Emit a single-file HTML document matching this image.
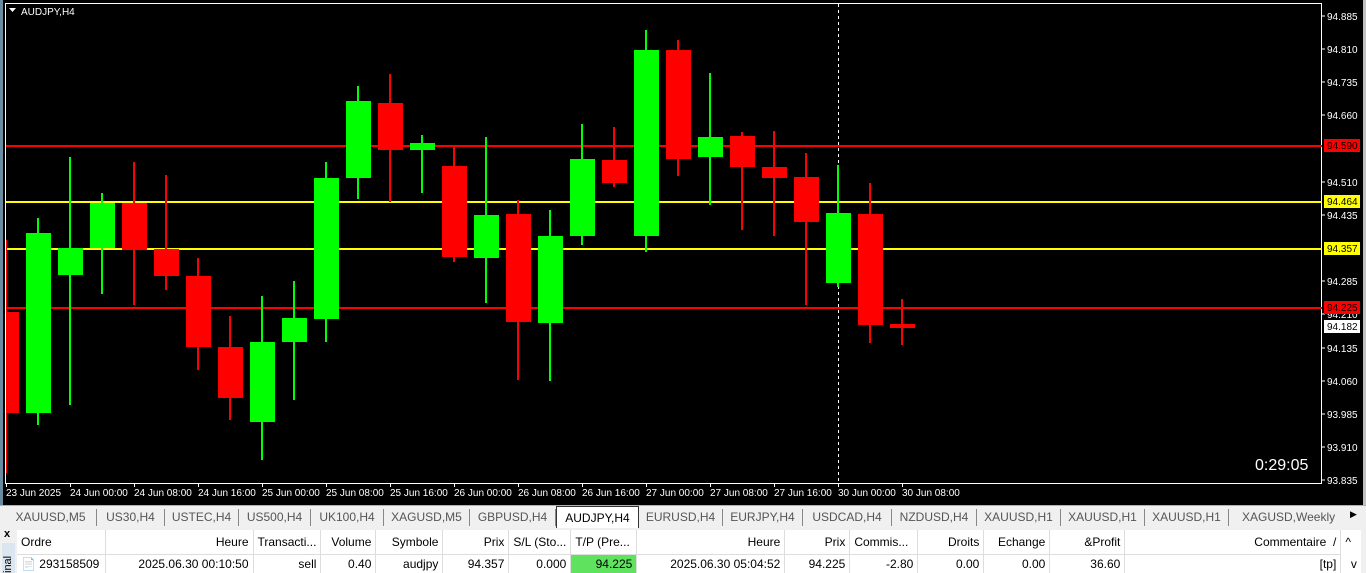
<!DOCTYPE html>
<html><head><meta charset="utf-8"><style>
*{margin:0;padding:0;box-sizing:border-box}
body{width:1366px;height:573px;overflow:hidden;background:#f0f0f0;font-family:"Liberation Sans",sans-serif;position:relative}
.tabs{position:absolute;left:0;top:505px;width:1366px;height:22px;background:#f0f0f0;border-top:1px solid #b0b0b0;font-size:12px;color:#555}
.tab{position:absolute;top:3px;height:17px;line-height:17px;border-right:1px solid #888;text-align:center}
.tab.act{background:#fff;color:#000;border:1px solid #333;border-bottom:none;top:0;height:22px;line-height:22px}
table{border-collapse:collapse;font-size:12px;position:absolute;left:17px;top:530px;background:#fff}
td{height:23px;padding:0 4px;border-right:1px solid #ddd;white-space:nowrap;color:#000}
tr.h td{border-bottom:1px solid #ddd;height:24px}
tr.r td{height:19px}
.r td{text-align:right}
</style></head><body>
<svg width="1366" height="505" style="position:absolute;left:0;top:0" font-family="Liberation Sans, sans-serif">
<rect x="0" y="0" width="1366" height="505" fill="#000"/>
<rect x="0" y="0" width="3" height="505" fill="#6a8aa0"/>
<rect x="1363" y="0" width="3" height="505" fill="#c0c0c0"/>
<rect x="5.5" y="3.5" width="1316" height="480" fill="none" stroke="#fff" stroke-width="1"/>
<g fill="#fff" font-size="10">
<text x="1327" y="20">94.885</text><text x="1327" y="53">94.810</text><text x="1327" y="86">94.735</text><text x="1327" y="119">94.660</text>
<text x="1327" y="186">94.510</text><text x="1327" y="219">94.435</text><text x="1327" y="285">94.285</text><text x="1327" y="318">94.210</text>
<text x="1327" y="352">94.135</text><text x="1327" y="385">94.060</text><text x="1327" y="418">93.985</text><text x="1327" y="451">93.910</text><text x="1327" y="484">93.835</text>
</g>
<g stroke="#fff"><path d="M1322 16h3M1322 49h3M1322 82h3M1322 115h3M1322 182h3M1322 215h3M1322 281h3M1322 314h3M1322 348h3M1322 381h3M1322 414h3M1322 447h3M1322 480h3"/></g>
<line x1="838.5" y1="4" x2="838.5" y2="483" stroke="#fff" stroke-dasharray="3,3"/>
<g id="c"></g>
<g stroke-width="2">
<line x1="6" y1="146" x2="1322" y2="146" stroke="#f00"/>
<line x1="6" y1="202" x2="1322" y2="202" stroke="#ff0"/>
<line x1="6" y1="249" x2="1322" y2="249" stroke="#ff0"/>
<line x1="6" y1="308" x2="1322" y2="308" stroke="#f00"/>
</g>
<rect x="1324" y="139" width="36" height="13" fill="#f00"/><text x="1327" y="149" font-size="10" fill="#000">94.590</text>
<rect x="1324" y="195" width="36" height="13" fill="#ff0"/><text x="1327" y="205" font-size="10" fill="#000">94.464</text>
<rect x="1324" y="242" width="36" height="13" fill="#ff0"/><text x="1327" y="252" font-size="10" fill="#000">94.357</text>
<rect x="1324" y="301" width="36" height="13" fill="#f00"/><text x="1327" y="311" font-size="10" fill="#000">94.225</text>
<rect x="1324" y="320" width="36" height="13" fill="#fff"/><text x="1327" y="330" font-size="10" fill="#000">94.182</text>
<path d="M9 8h7l-3.5 4z" fill="#fff"/>
<text x="21" y="15" font-size="10" fill="#fff">AUDJPY,H4</text>
<text x="1255" y="470" font-size="16" fill="#fff">0:29:05</text>
<g fill="#fff" font-size="10">
<text x="6" y="496">23 Jun 2025</text><text x="70" y="496">24 Jun 00:00</text><text x="134" y="496">24 Jun 08:00</text><text x="198" y="496">24 Jun 16:00</text>
<text x="262" y="496">25 Jun 00:00</text><text x="326" y="496">25 Jun 08:00</text><text x="390" y="496">25 Jun 16:00</text><text x="454" y="496">26 Jun 00:00</text>
<text x="518" y="496">26 Jun 08:00</text><text x="582" y="496">26 Jun 16:00</text><text x="646" y="496">27 Jun 00:00</text><text x="710" y="496">27 Jun 08:00</text>
<text x="774" y="496">27 Jun 16:00</text><text x="838" y="496">30 Jun 00:00</text><text x="902" y="496">30 Jun 08:00</text>
</g>
<g stroke="#fff"><path d="M6.5 484v3M70.5 484v3M134.5 484v3M198.5 484v3M262.5 484v3M326.5 484v3M390.5 484v3M454.5 484v3M518.5 484v3M582.5 484v3M646.5 484v3M710.5 484v3M774.5 484v3M838.5 484v3M902.5 484v3"/></g>
<rect x="7" y="312" width="12" height="101" fill="#f00"/><rect x="6" y="240" width="1" height="233" fill="#f00"/>
<g id="cs">
<!-- green: 0f0 red: f00 ; cx, bodyTop, bodyBot, wickTop, wickBot -->
<rect x="26" y="233" width="25" height="180" fill="#0f0"/><rect x="37" y="218" width="2" height="207" fill="#0f0"/>
<rect x="58" y="248" width="25" height="27" fill="#0f0"/><rect x="69" y="157" width="2" height="248" fill="#0f0"/>
<rect x="90" y="203" width="25" height="45" fill="#0f0"/><rect x="101" y="193" width="2" height="101" fill="#0f0"/>
<rect x="122" y="203" width="25" height="47" fill="#f00"/><rect x="133" y="162" width="2" height="143" fill="#f00"/>
<rect x="154" y="249" width="25" height="27" fill="#f00"/><rect x="165" y="175" width="2" height="115" fill="#f00"/>
<rect x="186" y="276" width="25" height="71" fill="#f00"/><rect x="197" y="258" width="2" height="112" fill="#f00"/>
<rect x="218" y="347" width="25" height="51" fill="#f00"/><rect x="229" y="316" width="2" height="104" fill="#f00"/>
<rect x="250" y="342" width="25" height="80" fill="#0f0"/><rect x="261" y="296" width="2" height="164" fill="#0f0"/>
<rect x="282" y="318" width="25" height="24" fill="#0f0"/><rect x="293" y="281" width="2" height="119" fill="#0f0"/>
<rect x="314" y="178" width="25" height="141" fill="#0f0"/><rect x="325" y="162" width="2" height="180" fill="#0f0"/>
<rect x="346" y="101" width="25" height="77" fill="#0f0"/><rect x="357" y="86" width="2" height="113" fill="#0f0"/>
<rect x="378" y="103" width="25" height="47" fill="#f00"/><rect x="389" y="74" width="2" height="128" fill="#f00"/>
<rect x="410" y="143" width="25" height="7" fill="#0f0"/><rect x="421" y="135" width="2" height="58" fill="#0f0"/>
<rect x="442" y="166" width="25" height="91" fill="#f00"/><rect x="453" y="145" width="2" height="117" fill="#f00"/>
<rect x="474" y="215" width="25" height="43" fill="#0f0"/><rect x="485" y="137" width="2" height="166" fill="#0f0"/>
<rect x="506" y="214" width="25" height="108" fill="#f00"/><rect x="517" y="200" width="2" height="180" fill="#f00"/>
<rect x="538" y="236" width="25" height="87" fill="#0f0"/><rect x="549" y="210" width="2" height="171" fill="#0f0"/>
<rect x="570" y="159" width="25" height="77" fill="#0f0"/><rect x="581" y="124" width="2" height="121" fill="#0f0"/>
<rect x="602" y="160" width="25" height="23" fill="#f00"/><rect x="613" y="127" width="2" height="60" fill="#f00"/>
<rect x="634" y="50" width="25" height="186" fill="#0f0"/><rect x="645" y="30" width="2" height="222" fill="#0f0"/>
<rect x="666" y="50" width="25" height="109" fill="#f00"/><rect x="677" y="40" width="2" height="136" fill="#f00"/>
<rect x="698" y="137" width="25" height="20" fill="#0f0"/><rect x="709" y="73" width="2" height="132" fill="#0f0"/>
<rect x="730" y="136" width="25" height="31" fill="#f00"/><rect x="741" y="132" width="2" height="98" fill="#f00"/>
<rect x="762" y="167" width="25" height="11" fill="#f00"/><rect x="773" y="131" width="2" height="105" fill="#f00"/>
<rect x="794" y="177" width="25" height="45" fill="#f00"/><rect x="805" y="153" width="2" height="152" fill="#f00"/>
<rect x="826" y="213" width="25" height="70" fill="#0f0"/><rect x="837" y="165" width="2" height="122" fill="#0f0"/>
<rect x="858" y="214" width="25" height="111" fill="#f00"/><rect x="869" y="183" width="2" height="160" fill="#f00"/>
<rect x="890" y="324" width="25" height="4" fill="#f00"/><rect x="901" y="299" width="2" height="46" fill="#f00"/>
</g>
</svg>
<div class="tabs">
<div class="tab" style="left:5px;width:92px">XAUUSD,M5</div>
<div class="tab" style="left:97px;width:68px">US30,H4</div>
<div class="tab" style="left:165px;width:74px">USTEC,H4</div>
<div class="tab" style="left:239px;width:72px">US500,H4</div>
<div class="tab" style="left:311px;width:73px">UK100,H4</div>
<div class="tab" style="left:384px;width:86px">XAGUSD,M5</div>
<div class="tab" style="left:470px;width:86px">GBPUSD,H4</div>
<div class="tab act" style="left:556px;width:83px">AUDJPY,H4</div>
<div class="tab" style="left:639px;width:84px">EURUSD,H4</div>
<div class="tab" style="left:723px;width:80px">EURJPY,H4</div>
<div class="tab" style="left:803px;width:89px">USDCAD,H4</div>
<div class="tab" style="left:892px;width:85px">NZDUSD,H4</div>
<div class="tab" style="left:977px;width:84px">XAUUSD,H1</div>
<div class="tab" style="left:1061px;width:84px">XAUUSD,H1</div>
<div class="tab" style="left:1145px;width:84px">XAUUSD,H1</div>
<div class="tab" style="left:1229px;width:115px;border:none;text-align:left;padding-left:13px">XAGUSD,Weekly ◂</div>
<div style="position:absolute;left:1350px;top:3px;font-size:9px;color:#000">▶</div>
</div>
<div style="position:absolute;left:0;top:527px;width:17px;height:46px;background:#f0f0f0">
<div style="position:absolute;left:4px;top:1px;font-size:11px;font-weight:bold">x</div>
<div style="position:absolute;left:2px;top:16px;width:13px;height:30px;background:#dce6f0;font-size:11px;writing-mode:vertical-rl;transform:rotate(180deg);line-height:13px">inal</div>
</div>
<table>
<tr class="h"><td style="width:88px">Ordre</td><td style="width:148px;text-align:right">Heure</td><td style="width:67px">Transacti...</td><td style="width:55px;text-align:right">Volume</td><td style="width:67px;text-align:right">Symbole</td><td style="width:66px;text-align:right">Prix</td><td style="width:59px">S/L (Sto...</td><td style="width:66px">T/P (Pre...</td><td style="width:148px;text-align:right">Heure</td><td style="width:65px;text-align:right">Prix</td><td style="width:68px">Commis...</td><td style="width:66px;text-align:right">Droits</td><td style="width:66px;text-align:right">Echange</td><td style="width:75px;text-align:right">&amp;Profit</td><td style="width:216px;text-align:right">Commentaire &nbsp;/</td><td style="width:20px;border:none">^</td></tr>
<tr class="r"><td style="text-align:left">📄 293158509</td><td>2025.06.30 00:10:50</td><td>sell</td><td>0.40</td><td>audjpy</td><td>94.357</td><td>0.000</td><td style="background:#5fe35f">94.225</td><td>2025.06.30 05:04:52</td><td>94.225</td><td>-2.80</td><td>0.00</td><td>0.00</td><td>36.60</td><td>[tp]</td><td style="border:none">v</td></tr>
</table>
</body></html>
